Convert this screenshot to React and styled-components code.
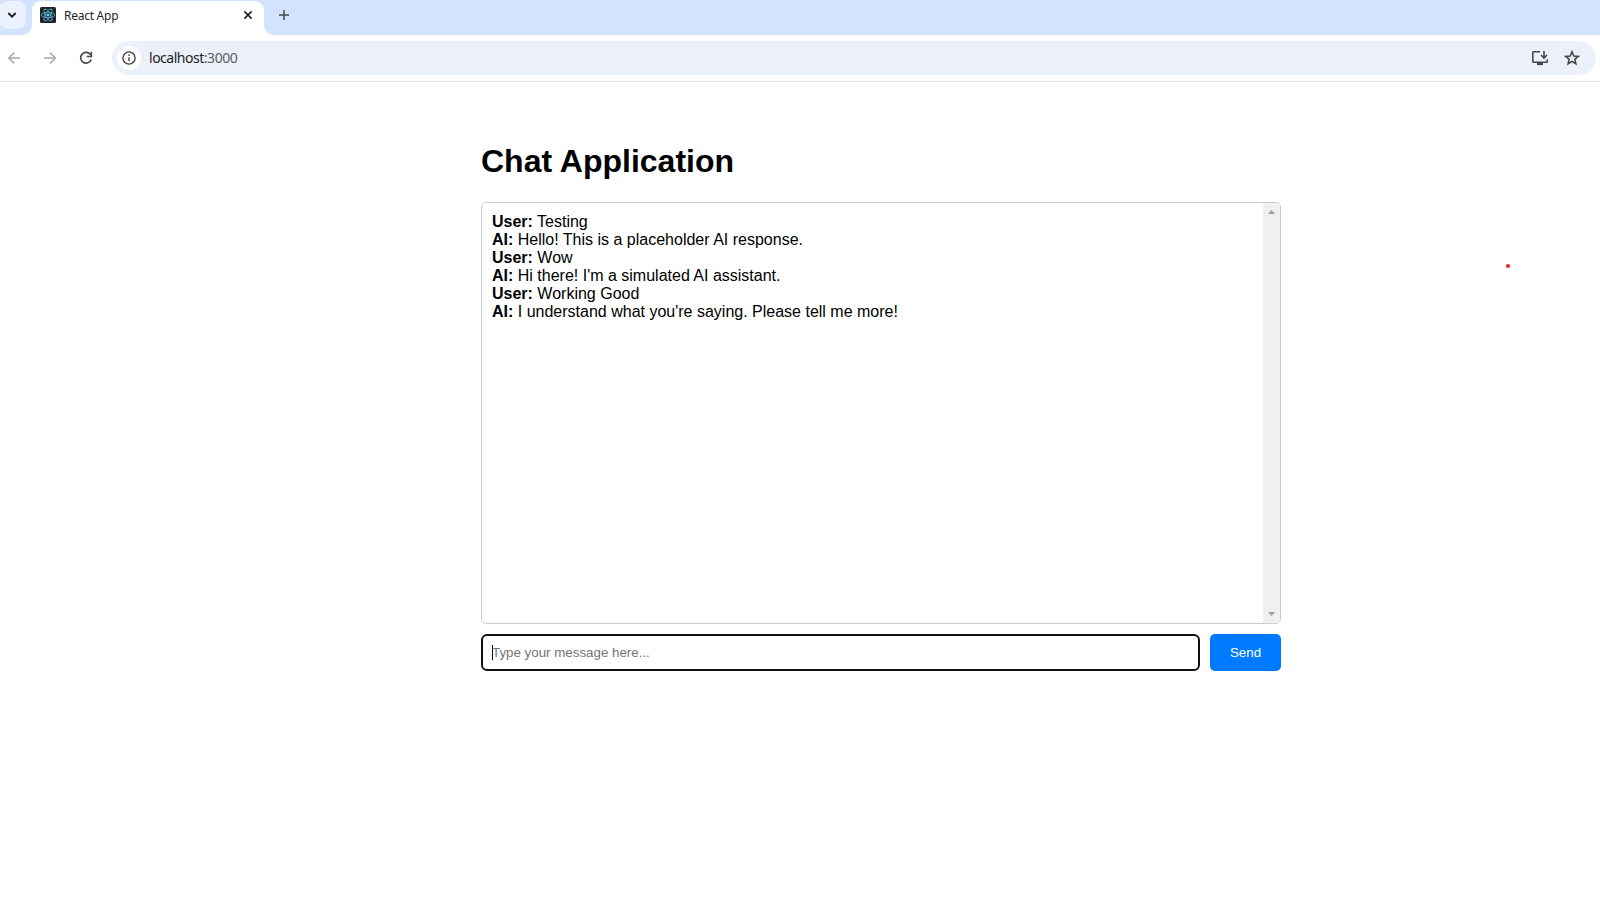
import React from "react";
import styled, { createGlobalStyle } from "styled-components";

const GlobalStyle = createGlobalStyle`
  * { box-sizing: border-box; }
  body { margin: 0; background: #fff; overflow: hidden; }
  svg { display: block; flex: none; }
`;

const Browser = styled.div`
  display: flex;
  flex-direction: column;
  height: 906px;
  font-family: "Noto Sans", "Open Sans", sans-serif;
`;

const TabStrip = styled.div`
  display: flex;
  height: 35px;
  background: #d3e3fd;
`;

const TabSearch = styled.div`
  display: flex;
  align-items: center;
  justify-content: center;
  width: 27px;
  height: 28px;
  margin: 1px 6px 0 -1px;
  padding-right: 1px;
  border-radius: 9px;
  background: #ebf1fd;
`;

const Tab = styled.div`
  position: relative;
  display: flex;
  align-items: center;
  width: 232px;
  height: 34px;
  margin-top: 1px;
  padding: 0 11px 6px 8px;
  border-radius: 9px 9px 0 0;
  background: #fff;

  &::before,
  &::after {
    content: "";
    position: absolute;
    bottom: 0;
    width: 10px;
    height: 10px;
  }
  &::before {
    left: -10px;
    background: radial-gradient(circle at 0 0, transparent 9.5px, #fff 10.5px);
  }
  &::after {
    right: -10px;
    background: radial-gradient(circle at 100% 0, transparent 9.5px, #fff 10.5px);
  }
`;

const TabTitle = styled.span`
  flex: 1;
  margin-left: 8px;
  padding-top: 2px;
  font-size: 12px;
  line-height: 16px;
  letter-spacing: -0.26px;
  color: #1f1f1f;
`;

const NewTab = styled.div`
  display: flex;
  padding: 9px 0 0 14px;
`;

const Toolbar = styled.div`
  display: flex;
  align-items: center;
  height: 47px;
  padding: 0 4px 1px 6px;
  border-bottom: 1px solid #dfe0e2;
`;

const NavButton = styled.div`
  width: 16px;
  margin-right: ${(p) => p.$gap}px;
`;

const AddressBar = styled.div`
  display: flex;
  align-items: center;
  flex: 1;
  height: 34px;
  padding: 0 16px 0 5px;
  border-radius: 17px;
  background: #ebf0fa;
`;

const SiteInfo = styled.div`
  display: flex;
  align-items: center;
  justify-content: center;
  width: 24px;
  height: 24px;
  border-radius: 50%;
  background: #fff;
`;

const Url = styled.span`
  flex: 1;
  margin-left: 8px;
  font-size: 14px;
  line-height: 20px;
  letter-spacing: -0.48px;
  color: #1f1f1f;
`;

const Port = styled.span`
  color: #5c5e63;
`;

const AddressActions = styled.div`
  display: flex;
  align-items: center;
  gap: 15px;
`;

const Page = styled.main`
  position: relative;
  flex: 1;
  padding-top: 61px;
  font-family: "Liberation Sans", Arial, sans-serif;
  color: #000;
`;

const Chat = styled.section`
  width: 800px;
  margin-left: 481px;
`;

const Title = styled.h1`
  margin: 0 0 23px;
  font-size: 32px;
  line-height: 36px;
  font-weight: 700;
`;

const Messages = styled.div`
  display: flex;
  height: 422px;
  border: 1px solid #ccc;
  border-radius: 5px;
  overflow: hidden;
`;

const MessageList = styled.div`
  flex: 1;
  padding: 10px;
`;

const Message = styled.div`
  font-size: 16px;
  line-height: 18px;
`;

const ScrollTrack = styled.div`
  display: flex;
  flex-direction: column;
  justify-content: space-between;
  align-items: center;
  width: 17px;
  padding: 7px 0;
  background: #f0f0f0;
`;

const Composer = styled.div`
  display: flex;
  gap: 10px;
  height: 37px;
  margin-top: 10px;
`;

const InputBox = styled.div`
  display: flex;
  align-items: center;
  flex: 1;
  padding-left: 9px;
  border: 2px solid #101010;
  border-radius: 6px;
  font-size: 13.333px;
  color: #757575;
`;

const Caret = styled.span`
  width: 1px;
  height: 15px;
  margin-right: -1px;
  background: #000;
`;

const SendButton = styled.button`
  width: 71px;
  padding: 0;
  border: 0;
  border-radius: 5px;
  background: #007bff;
  color: #fff;
  font: 13.333px "Liberation Sans", Arial, sans-serif;
`;

const PointerDot = styled.span`
  position: absolute;
  top: 182px;
  left: 1505.5px;
  width: 4px;
  height: 4px;
  border-radius: 50%;
  background: #f01c24;
`;

const messages = [
  ["User", "Testing"],
  ["AI", "Hello! This is a placeholder AI response."],
  ["User", "Wow"],
  ["AI", "Hi there! I'm a simulated AI assistant."],
  ["User", "Working Good"],
  ["AI", "I understand what you're saying. Please tell me more!"],
];

const ReactLogo = () => (
  <svg width="16" height="16" viewBox="0 0 16 16">
    <rect width="16" height="16" rx="1.5" fill="#20232a" />
    <g fill="none" stroke="#53b9d3" strokeWidth="0.8">
      <ellipse cx="8" cy="8" rx="6.8" ry="2.6" />
      <ellipse cx="8" cy="8" rx="6.8" ry="2.6" transform="rotate(60 8 8)" />
      <ellipse cx="8" cy="8" rx="6.8" ry="2.6" transform="rotate(120 8 8)" />
    </g>
    <circle cx="8" cy="8" r="1.4" fill="#61dafb" />
  </svg>
);

const Arrow = ({ flip }) => (
  <svg width="16" height="16" viewBox="0 0 16 16" fill="none" stroke="#ababab" strokeWidth="1.5">
    <path d={flip ? "M2 8H13.2M8 2.6L13.4 8L8 13.4" : "M14 8H3M8.2 2.6L2.8 8L8.2 13.4"} />
  </svg>
);

export default function App() {
  return (
    <Browser>
      <GlobalStyle />
      <TabStrip>
        <TabSearch>
          <svg width="10" height="10" viewBox="0 0 10 10" fill="none" stroke="#1f1f1f" strokeWidth="1.9">
            <path d="M1.3 3L5 6.7L8.7 3" />
          </svg>
        </TabSearch>
        <Tab>
          <ReactLogo />
          <TabTitle>React App</TabTitle>
          <svg width="10" height="10" viewBox="0 0 10 10" stroke="#1f1f1f" strokeWidth="1.6">
            <path d="M1.4 1.4L8.6 8.6M8.6 1.4L1.4 8.6" />
          </svg>
        </Tab>
        <NewTab>
          <svg width="12" height="12" viewBox="0 0 12 12" stroke="#474747" strokeWidth="1.5">
            <path d="M6 1V11M1 6H11" />
          </svg>
        </NewTab>
      </TabStrip>
      <Toolbar>
        <NavButton $gap={20}><Arrow /></NavButton>
        <NavButton $gap={20}><Arrow flip /></NavButton>
        <NavButton $gap={18}>
          <svg width="16" height="16" viewBox="0 0 16 16">
            <path d="M12.8 5.1A5.4 5.4 0 1 0 13.2 9.5" fill="none" stroke="#474747" strokeWidth="1.6" />
            <path d="M13.3 1.8V6.5H8.7" fill="none" stroke="#474747" strokeWidth="1.6" />
          </svg>
        </NavButton>
        <AddressBar>
          <SiteInfo>
            <svg width="14" height="14" viewBox="0 0 14 14">
              <circle cx="7" cy="7" r="6.1" fill="none" stroke="#404040" strokeWidth="1.4" />
              <path d="M7 6.2V10.2M7 3.6V5" stroke="#404040" strokeWidth="1.4" />
            </svg>
          </SiteInfo>
          <Url>localhost<Port>:3000</Port></Url>
          <AddressActions>
            <svg width="18" height="16" viewBox="0 0 18 16" fill="none" stroke="#474747" strokeWidth="1.6">
              <path d="M9 1.8H2.5Q1.8 1.8 1.8 2.5V11.4Q1.8 12.2 2.5 12.2H15.5Q16.2 12.2 16.2 11.4V9.5" />
              <path d="M13 1V7.5M10 5L13 8L16 5" />
              <path d="M6 13.8H12" strokeWidth="2.6" />
            </svg>
            <svg width="16" height="16" viewBox="0 0 16 16" fill="none" stroke="#474747" strokeWidth="1.6">
              <path d="M8 1.8L9.8 6L14.3 6.4L10.9 9.3L11.9 13.8L8 11.4L4.1 13.8L5.1 9.3L1.7 6.4L6.2 6Z" />
            </svg>
          </AddressActions>
        </AddressBar>
      </Toolbar>
      <Page>
        <Chat>
          <Title>Chat Application</Title>
          <Messages>
            <MessageList>
              {messages.map(([author, text]) => (
                <Message key={text}>
                  <strong>{author}:</strong> {text}
                </Message>
              ))}
            </MessageList>
            <ScrollTrack>
              <svg width="7" height="4" viewBox="0 0 7 4"><path d="M0 4L3.5 0L7 4Z" fill="#a0a0a0" /></svg>
              <svg width="7" height="4" viewBox="0 0 7 4"><path d="M0 0L3.5 4L7 0Z" fill="#a0a0a0" /></svg>
            </ScrollTrack>
          </Messages>
          <Composer>
            <InputBox><Caret />Type your message here...</InputBox>
            <SendButton>Send</SendButton>
          </Composer>
        </Chat>
        <PointerDot />
      </Page>
    </Browser>
  );
}
